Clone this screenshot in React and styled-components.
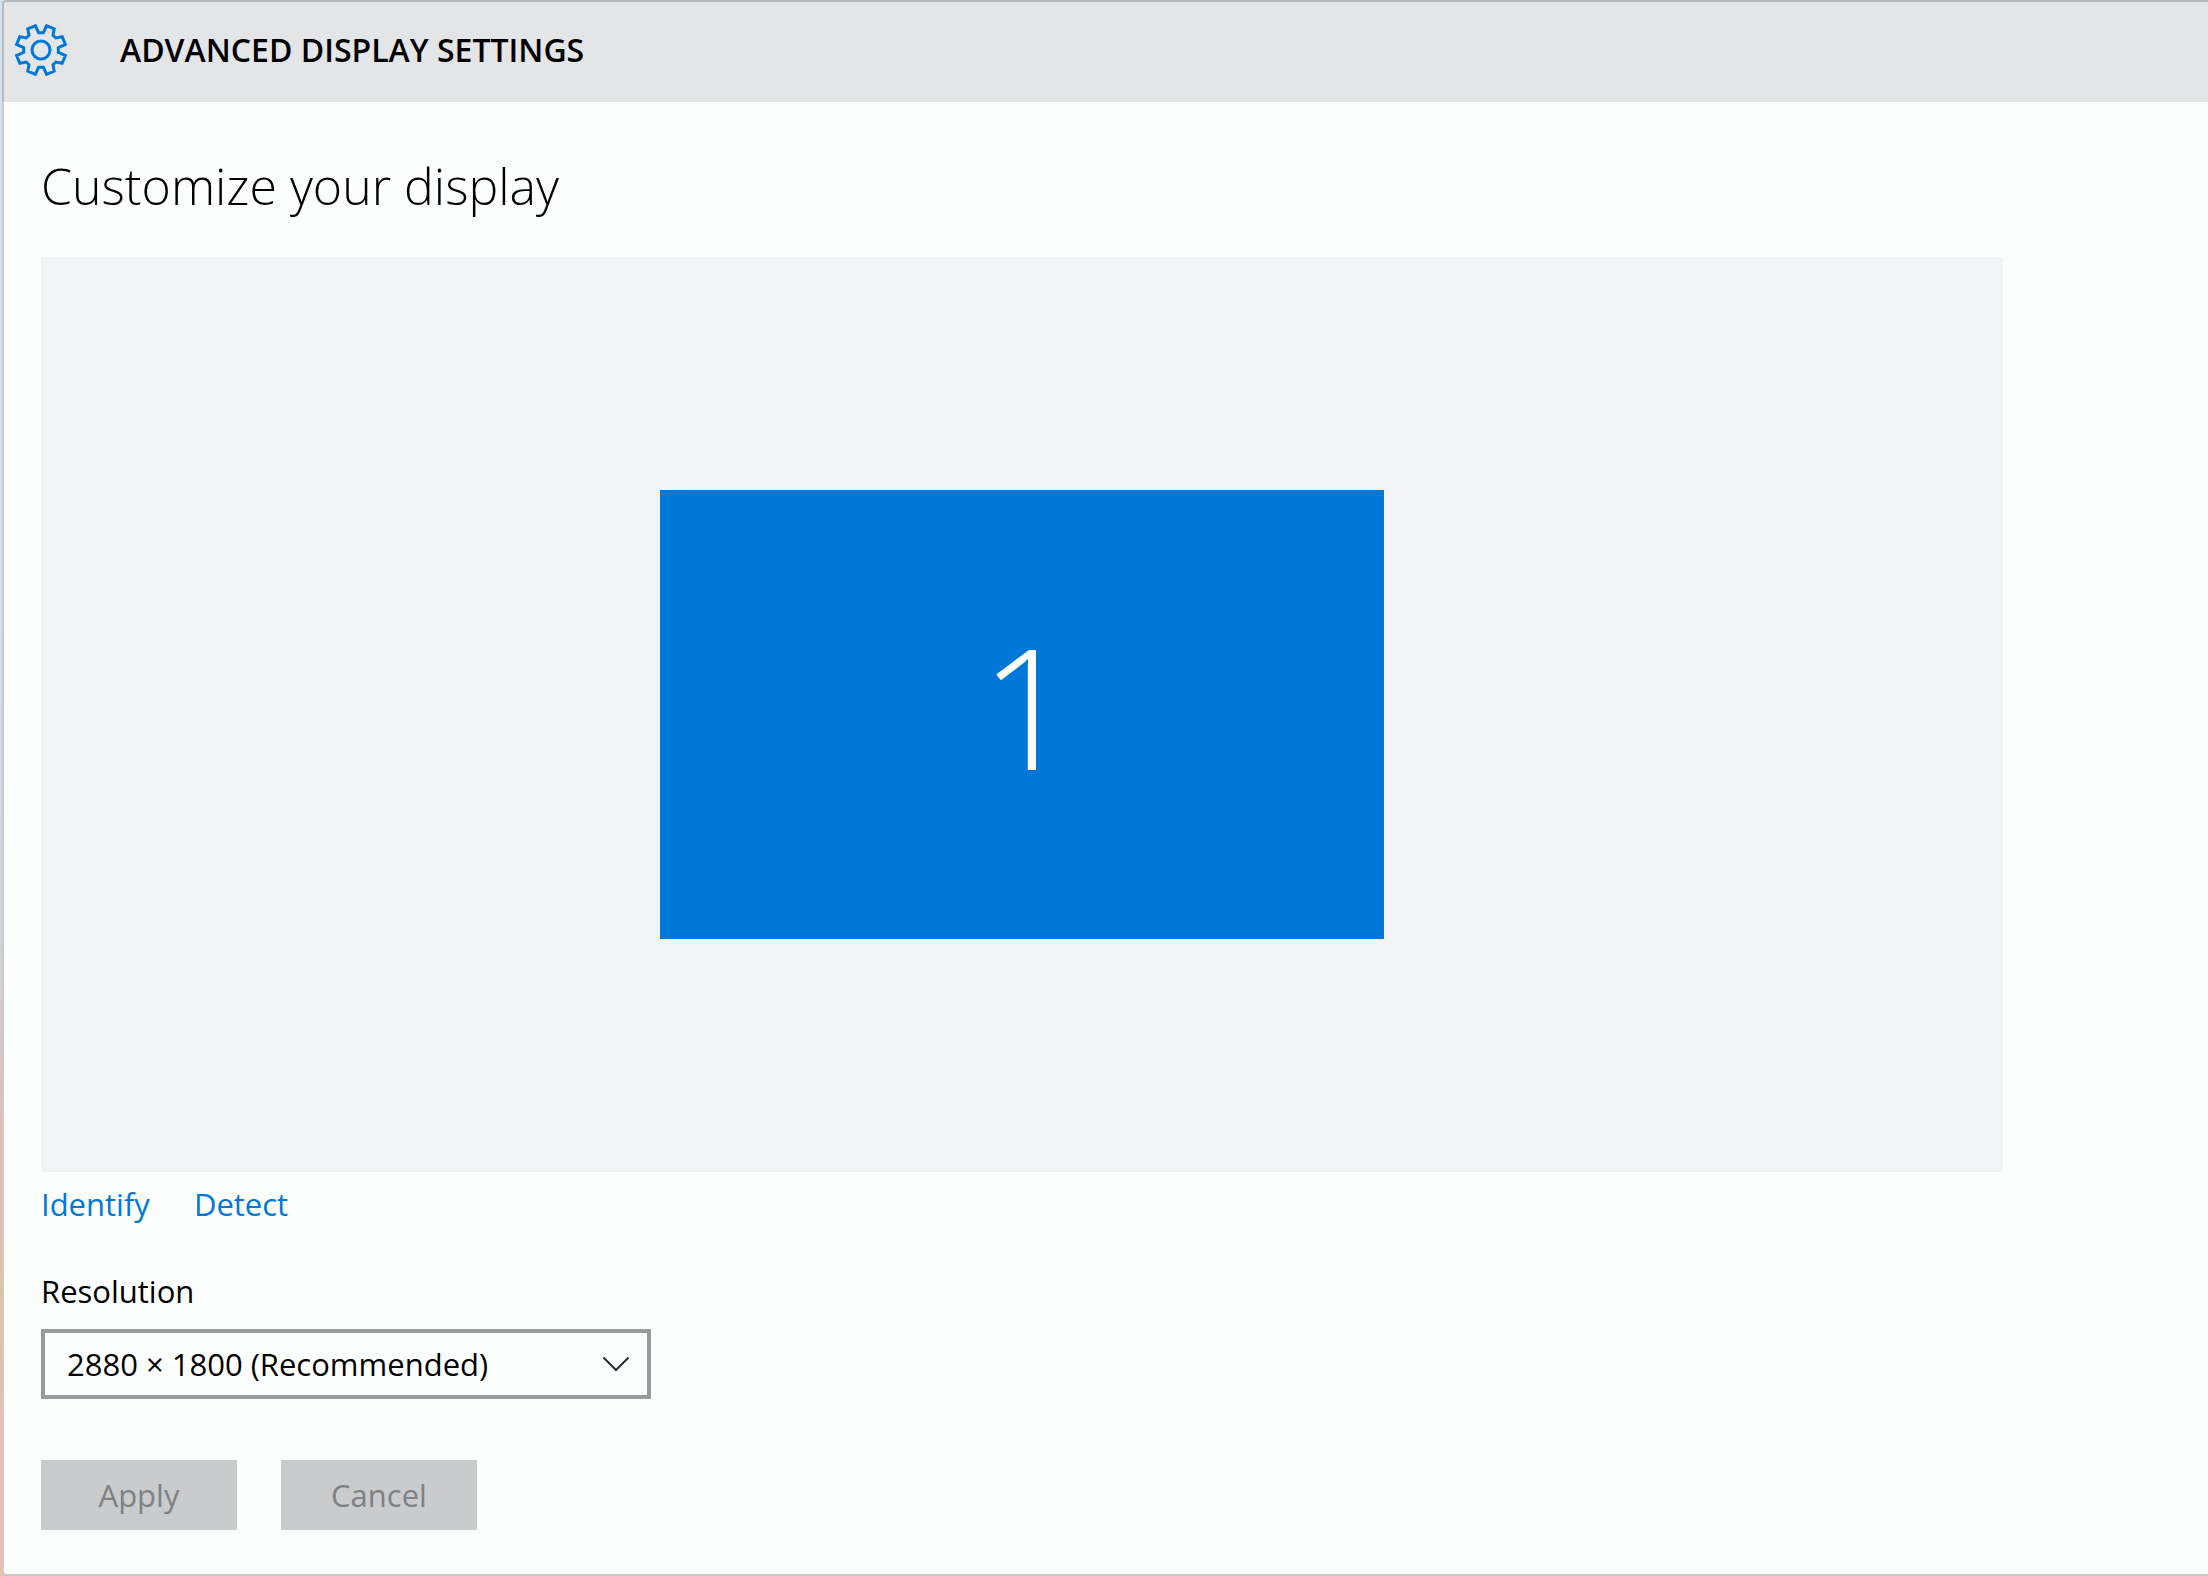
import React, { useState } from 'react'
import styled, { createGlobalStyle } from 'styled-components'

// outline of the cog, one quarter at a time: two teeth with a diagonal notch between
const QUARTER = [
	[17.5, 8],
	[25, 13],
	[25, 32],
	[19, 39],
	[19, 51],
	[25, 58],
	[25, 77],
	[17.5, 82],
]

const gearPoints = [0, 90, 180, 270]
	.flatMap(turn => QUARTER.map(([radius, degrees]) => {
		const angle = ((turn + degrees) * Math.PI) / 180
		return `${(27 + radius * Math.sin(angle)).toFixed(1)},${(27 - radius * Math.cos(angle)).toFixed(1)}`
	}))
	.join(' ')

const GearIcon = () => (
	<svg width='54' height='54' viewBox='0 0 54 54' fill='none' stroke='#0078d9' strokeWidth='3' aria-hidden='true'>
		<polygon points={gearPoints} />
		<circle cx='27' cy='27' r='9' />
	</svg>
)

const App = () => {
	const [resolution, setResolution] = useState('2880x1800')

	return (
		<Desktop>
			<GlobalStyle />
			<Header>
				<GearIcon />
				<Title>ADVANCED DISPLAY SETTINGS</Title>
			</Header>
			<Content>
				<Heading>Customize your display</Heading>
				<Canvas>
					<Monitor>1</Monitor>
				</Canvas>
				<Links>
					<Link href='#identify'>Identify</Link>
					<Link href='#detect'>Detect</Link>
				</Links>
				<Label htmlFor='resolution'>Resolution</Label>
				<SelectBox>
					<Select id='resolution' value={resolution} onChange={e => setResolution(e.target.value)}>
						<option value='2880x1800'>2880 × 1800 (Recommended)</option>
						<option value='1920x1200'>1920 × 1200</option>
						<option value='1680x1050'>1680 × 1050</option>
					</Select>
					<Chevron viewBox='0 0 28 16' aria-hidden='true'>
						<path d='M1.5 1.5 L14 14 L26.5 1.5' />
					</Chevron>
				</SelectBox>
				<Buttons>
					<Button type='button' disabled>Apply</Button>
					<Button type='button' disabled>Cancel</Button>
				</Buttons>
			</Content>
		</Desktop>
	)
}

export default App

const GlobalStyle = createGlobalStyle`
	* {
		box-sizing: border-box;
	}

	body {
		margin: 0;
		font-family: "Open Sans", "Noto Sans", sans-serif;
		font-size: 31px;
		line-height: 44px;
		color: #000;
	}
`

// a sliver of the wallpaper shows along the left edge of the window
const Desktop = styled.div`
	display: flex;
	flex-direction: column;
	min-height: 100vh;
	padding-left: 2px;
	background: linear-gradient(#cfe2f2, #d0e0f0 40%, #d2d3dc 60%, #e8b9ac 72%, #e2c1a0 82%, #f0bda8 90%);
`

const Header = styled.header`
	display: flex;
	align-items: center;
	gap: 52px;
	height: 102px;
	padding: 0 10px 4px;
	background: #e4e5e7;
	border-top: 2px solid #b8b9bb;
	border-left: 2px solid #b8b9bb;
	border-top-left-radius: 4px;
`

const Title = styled.h1`
	margin: 0;
	font-size: 32px;
	font-weight: 600;
`

const Content = styled.main`
	flex: 1;
	padding: 48px 205px 44px 37px;
	background: #fdfefe;
	border-left: 2px solid #c9cbcb;
	border-bottom: 2px solid #c9cbcb;
	border-bottom-left-radius: 4px;
`

const Heading = styled.h2`
	margin: 0 0 35px;
	font-size: 50px;
	font-weight: 300;
	line-height: 72px;
`

const Canvas = styled.section`
	display: flex;
	align-items: center;
	justify-content: center;
	height: 915px;
	background: #f2f3f5;
`

const Monitor = styled.div`
	display: flex;
	align-items: center;
	justify-content: center;
	width: 724px;
	height: 449px;
	padding: 0 0 20px 12px;
	background: #0078d9;
	color: #fff;
	font-size: 168px;
	font-weight: 300;
`

const Links = styled.nav`
	display: flex;
	gap: 44px;
	margin: 10px 0 43px;
`

const Link = styled.a`
	color: #0078d9;
	text-decoration: none;
`

const Label = styled.label`
	display: block;
	margin-bottom: 16px;
`

const SelectBox = styled.div`
	position: relative;
	width: 610px;
	max-width: 100%;
`

const Select = styled.select`
	display: block;
	width: 100%;
	height: 70px;
	padding: 0 60px 0 22px;
	appearance: none;
	background: #fdfefe;
	border: 4px solid #989a9b;
	border-radius: 0;
	color: #000;
	font: inherit;
`

const Chevron = styled.svg`
	position: absolute;
	top: 27px;
	right: 21px;
	width: 28px;
	height: 16px;
	fill: none;
	stroke: #2b2c2d;
	stroke-width: 2;
	pointer-events: none;
`

const Buttons = styled.div`
	display: flex;
	gap: 44px;
	margin-top: 61px;
`

const Button = styled.button`
	width: 196px;
	height: 70px;
	padding: 0;
	background: #cacbcd;
	border: none;
	color: #808183;
	font: inherit;
`
